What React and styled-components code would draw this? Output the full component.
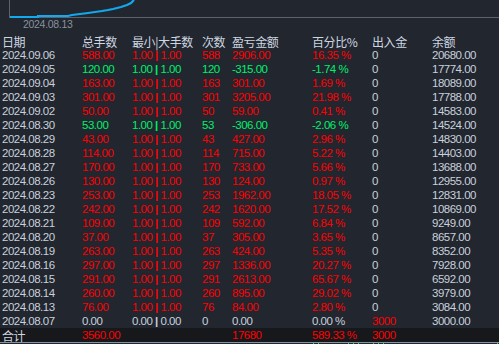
import React from "react";
import styled, { createGlobalStyle } from "styled-components";

const Global = createGlobalStyle`
  html, body { margin: 0; padding: 0; background: #21262f; overflow: hidden; }
  #root { width: 499px; height: 344px; }
`;

const C = {
  r: "#ff0000",
  g: "#00f06a",
  n: "#c9d1dc",
};

const Page = styled.div`
  width: 499px;
  height: 344px;
  background: #21262f;
  display: flex;
  flex-direction: column;
  font-family: "Liberation Sans", Arial, sans-serif;
  color: ${C.n};
`;

const ChartArea = styled.div`
  height: 35px;
  display: flex;
  flex-direction: column;
`;

const ChartSvg = styled.svg`
  display: block;
  width: 499px;
  height: 19px;
`;

const DateLabel = styled.div`
  padding-left: 23px;
  font-size: 10.5px;
  line-height: 10px;
  color: #8a929c;
  letter-spacing: -0.3px;
`;

const Row = styled.div`
  display: grid;
  grid-template-columns: 80px 50px 70px 30px 80px 60px 60px 1fr;
  padding-left: 2px;
  height: ${(p) => p.$h || 14}px;
  line-height: ${(p) => p.$h || 14}px;
  background: ${(p) => p.$bg || "transparent"};
  white-space: nowrap;
  align-items: center;
`;

const Head = styled.div`
  font-family: "Noto Sans CJK SC", "Liberation Sans", sans-serif;
  font-size: 12px;
  line-height: 13px;
  letter-spacing: -0.4px;
  color: #cfd6e0;
`;

const Cell = styled.div`
  font-size: 11.5px;
  letter-spacing: -0.5px;
  color: ${(p) => p.$c || C.n};
`;

const Bar = styled.span`
  font-weight: 700;
`;

const BottomLine = styled.div`
  height: 1px;
  background: #8393a6;
`;

const Ticks = styled.svg`
  display: block;
  width: 499px;
  height: 1px;
`;

const rows = [
  ["2024.09.06", "588.00", "1.00", "588", "2906.00", "16.35 %", "0", "20680.00", "r"],
  ["2024.09.05", "120.00", "1.00", "120", "-315.00", "-1.74 %", "0", "17774.00", "g"],
  ["2024.09.04", "163.00", "1.00", "163", "301.00", "1.69 %", "0", "18089.00", "r"],
  ["2024.09.03", "301.00", "1.00", "301", "3205.00", "21.98 %", "0", "17788.00", "r"],
  ["2024.09.02", "50.00", "1.00", "50", "59.00", "0.41 %", "0", "14583.00", "r"],
  ["2024.08.30", "53.00", "1.00", "53", "-306.00", "-2.06 %", "0", "14524.00", "g"],
  ["2024.08.29", "43.00", "1.00", "43", "427.00", "2.96 %", "0", "14830.00", "r"],
  ["2024.08.28", "114.00", "1.00", "114", "715.00", "5.22 %", "0", "14403.00", "r"],
  ["2024.08.27", "170.00", "1.00", "170", "733.00", "5.66 %", "0", "13688.00", "r"],
  ["2024.08.26", "130.00", "1.00", "130", "124.00", "0.97 %", "0", "12955.00", "r"],
  ["2024.08.23", "253.00", "1.00", "253", "1962.00", "18.05 %", "0", "12831.00", "r"],
  ["2024.08.22", "242.00", "1.00", "242", "1620.00", "17.52 %", "0", "10869.00", "r"],
  ["2024.08.21", "109.00", "1.00", "109", "592.00", "6.84 %", "0", "9249.00", "r"],
  ["2024.08.20", "37.00", "1.00", "37", "305.00", "3.65 %", "0", "8657.00", "r"],
  ["2024.08.19", "263.00", "1.00", "263", "424.00", "5.35 %", "0", "8352.00", "r"],
  ["2024.08.16", "297.00", "1.00", "297", "1336.00", "20.27 %", "0", "7928.00", "r"],
  ["2024.08.15", "291.00", "1.00", "291", "2613.00", "65.67 %", "0", "6592.00", "r"],
  ["2024.08.14", "260.00", "1.00", "260", "895.00", "29.02 %", "0", "3979.00", "r"],
  ["2024.08.13", "76.00", "1.00", "76", "84.00", "2.80 %", "0", "3084.00", "r"],
  ["2024.08.07", "0.00", "0.00", "0", "0.00", "0.00 %", "3000", "3000.00", "n"],
];

const headers = ["日期", "总手数", "最小|大手数", "次数", "盈亏金额", "百分比%", "出入金", "余额"];

const linePts =
  "10,17 38,17 38,16 68,16 72,15 80,14 88,13 95,12 102,11 108,10 113,9 117,8 121,7 124,6 127,5 129,4 131,3 132,2 133,1 134,0";

const tickXs = [313, 318, 348, 353, 358, 373, 378, 383, 497];

export default function App() {
  return (
    <Page>
      <Global />
      <ChartArea>
        <ChartSvg viewBox="0 0 499 19">
          <line x1="9.5" y1="0" x2="9.5" y2="17.5" stroke="#5d6169" strokeWidth="1" />
          <line x1="9" y1="17.5" x2="499" y2="17.5" stroke="#5d6169" strokeWidth="1" />
          <polyline points={linePts} fill="none" stroke="#12a9ef" strokeWidth="2.2" />
        </ChartSvg>
        <DateLabel>2024.08.13</DateLabel>
      </ChartArea>
      <Row $h={13}>
        {headers.map((h) => (
          <Head key={h}>{h}</Head>
        ))}
      </Row>
      {rows.map((r) => {
        const col = C[r[8]];
        const last = r[8] === "n";
        return (
          <Row key={r[0]}>
            <Cell>{r[0]}</Cell>
            <Cell $c={col}>{r[1]}</Cell>
            <Cell $c={col}>
              {r[2]} <Bar>|</Bar> {r[2]}
            </Cell>
            <Cell $c={col}>{r[3]}</Cell>
            <Cell $c={col}>{r[4]}</Cell>
            <Cell $c={col}>{r[5]}</Cell>
            <Cell $c={last ? C.r : C.n}>{r[6]}</Cell>
            <Cell>{r[7]}</Cell>
          </Row>
        );
      })}
      <Row $bg="#16181b">
        <Head>合计</Head>
        <Cell $c={C.r}>3560.00</Cell>
        <Cell />
        <Cell />
        <Cell $c={C.r}>17680</Cell>
        <Cell $c={C.r}>589.33 %</Cell>
        <Cell $c={C.r}>3000</Cell>
        <Cell />
      </Row>
      <BottomLine />
      <Ticks viewBox="0 0 499 1">
        {tickXs.map((x) => (
          <rect key={x} x={x} y="0" width="1" height="1" fill="#3ecf4a" />
        ))}
      </Ticks>
    </Page>
  );
}
